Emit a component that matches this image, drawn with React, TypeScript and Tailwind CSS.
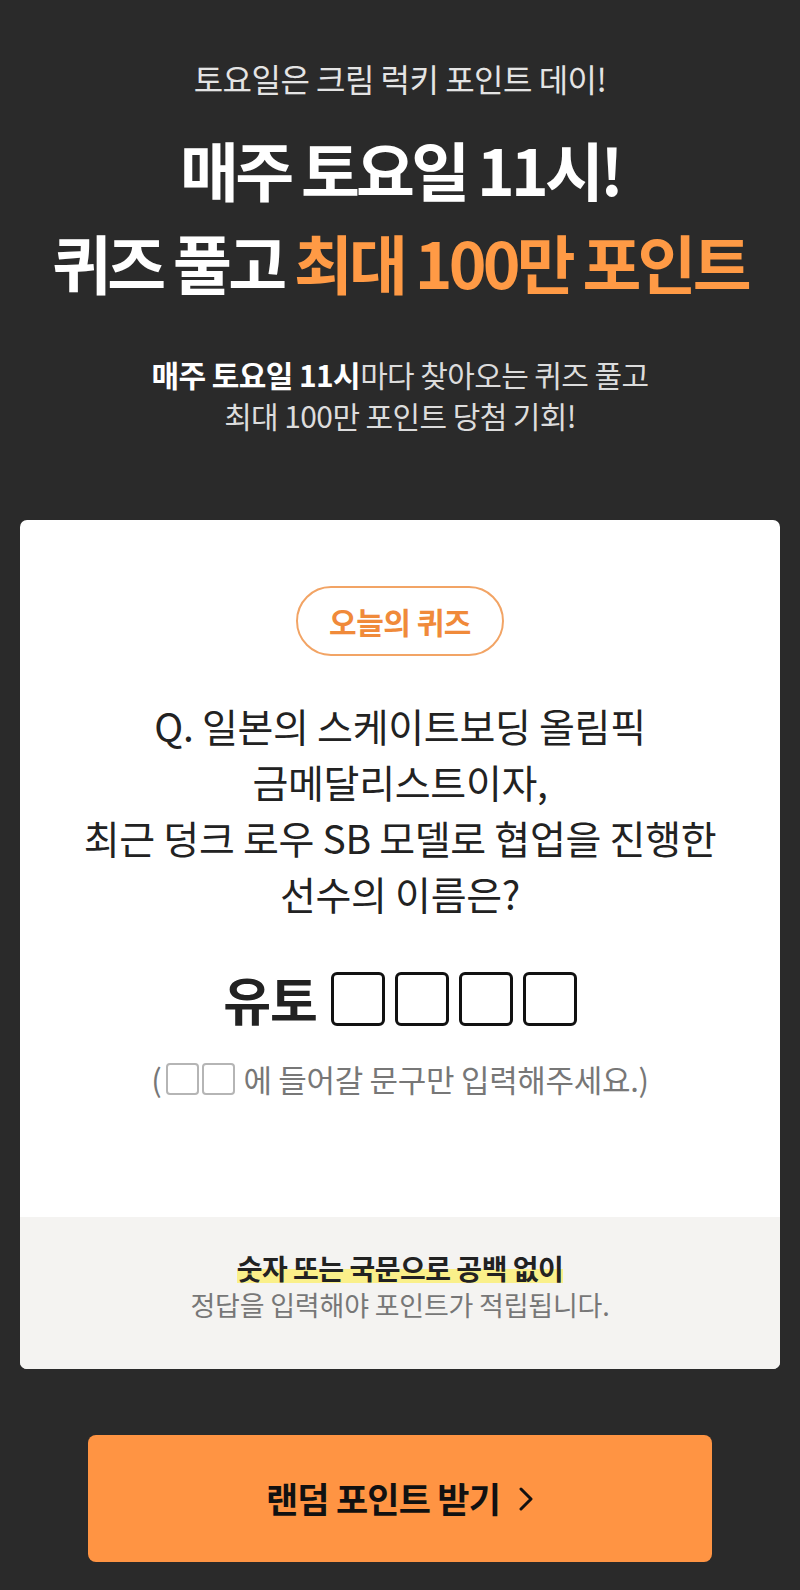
import React from "react";

const font = { fontFamily: '"Noto Sans CJK KR", "Noto Sans", sans-serif' };

function BigBox() {
  return <div className="w-[54px] h-[54px] border-[3px] border-[#111] rounded-[6px] bg-white" />;
}

function SmallBox() {
  return <span className="inline-block w-[33px] h-[32px] border-2 border-[#b5b5b5] rounded-[4px] align-middle" />;
}

export default function App() {
  return (
    <div style={font} className="w-[800px] min-h-[1590px] bg-[#2a2a2a] flex flex-col items-center pt-[58px] pb-[29px]">
      <p className="text-[32px] leading-[40px] tracking-[-0.5px] text-[#e4e4e4]">토요일은 크림 럭키 포인트 데이!</p>
      <h1 className="mt-[24px] text-[64px] leading-[93px] tracking-[-3.8px] font-bold text-white text-center">
        <span className="block">매주 토요일 11시!</span>
        <span className="block">
          퀴즈 풀고 <span className="text-[#ff9a45]">최대 100만 포인트</span>
        </span>
      </h1>
      <div className="mt-[46px] text-[30px] leading-[41px] tracking-[-0.6px] text-[#dcdcdc] text-center">
        <p>
          <span className="font-bold text-white">매주 토요일 11시</span>마다 찾아오는 퀴즈 풀고
        </p>
        <p>최대 100만 포인트 당첨 기회!</p>
      </div>

      <div className="mt-[84px] w-[760px] bg-white rounded-[7px] overflow-hidden flex flex-col">
        <div className="flex flex-col items-center pt-[66px] pb-[118px]">
          <div className="w-[208px] h-[70px] rounded-full border-2 border-[#f2a465] flex items-center justify-center">
            <span className="text-[30px] font-semibold tracking-[-0.5px] text-[#f08a3a]">오늘의 퀴즈</span>
          </div>
          <div className="mt-[41px] text-[39px] leading-[56px] tracking-[-0.3px] text-[#222] text-center">
            <p>Q. 일본의 스케이트보딩 올림픽</p>
            <p>금메달리스트이자,</p>
            <p>최근 덩크 로우 SB 모델로 협업을 진행한</p>
            <p>선수의 이름은?</p>
          </div>
          <div className="mt-[51px] flex items-center">
            <span className="text-[52px] leading-[54px] font-bold text-[#222] tracking-[-1px] mr-[14px]">유토</span>
            <div className="flex gap-[10px]">
              <BigBox />
              <BigBox />
              <BigBox />
              <BigBox />
            </div>
          </div>
          <div className="mt-[33px] h-[40px] flex items-center text-[31px] leading-[40px] text-[#777] tracking-[-0.3px]">
            <span>(</span>
            <span className="flex gap-[3px] ml-[5px] mr-[8px]">
              <SmallBox />
              <SmallBox />
            </span>
            <span>에 들어갈 문구만 입력해주세요.)</span>
          </div>
        </div>
        <div className="bg-[#f4f3f1] flex flex-col items-center pt-[33px] pb-[46px]">
          <div className="h-[37px] flex items-center">
            <span className="inline-block text-[28px] leading-[37px] font-semibold text-[#222] tracking-[-0.5px] bg-[linear-gradient(transparent_50%,#faf08a_50%,#faf08a_90%,transparent_90%)]">
              숫자 또는 국문으로 공백 없이
            </span>
          </div>
          <div className="h-[36px] flex items-center">
            <span className="text-[27px] leading-[36px] text-[#777] tracking-[-0.2px]">정답을 입력해야 포인트가 적립됩니다.</span>
          </div>
        </div>
      </div>

      <button className="mt-[66px] w-[624px] h-[127px] rounded-[8px] bg-[#ff9443] flex items-center justify-center gap-[18px]">
        <span className="text-[35px] font-bold text-[#111] tracking-[-0.8px]">랜덤 포인트 받기</span>
        <svg width="16" height="24" viewBox="0 0 16 24" fill="none">
          <path d="M3 2 L13 12 L3 22" stroke="#111" strokeWidth="3" strokeLinecap="round" strokeLinejoin="round" />
        </svg>
      </button>
    </div>
  );
}
